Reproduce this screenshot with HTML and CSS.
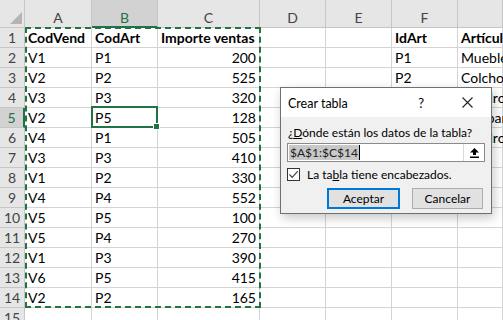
FILE: index.html
```html
<!DOCTYPE html>
<html lang="es">
<head>
<meta charset="utf-8">
<link rel="stylesheet" href="styles.css">
</head>
<body>
<div class="sheet">
  <div class="corner"><span class="tri"></span></div>
  <div class="ch">A</div><div class="ch sel-c">B</div><div class="ch">C</div><div class="ch">D</div><div class="ch">E</div><div class="ch">F</div><div class="ch"></div>

  <div class="rh">1</div><div class="c b">CodVend</div><div class="c b">CodArt</div><div class="c b">Importe ventas</div><div class="c"></div><div class="c"></div><div class="c b">IdArt</div><div class="c b">Artículo</div>
  <div class="rh">2</div><div class="c">V1</div><div class="c">P1</div><div class="c num">200</div><div class="c"></div><div class="c"></div><div class="c">P1</div><div class="c">Mueble</div>
  <div class="rh">3</div><div class="c">V2</div><div class="c">P2</div><div class="c num">525</div><div class="c"></div><div class="c"></div><div class="c">P2</div><div class="c">Colcho</div>
  <div class="rh">4</div><div class="c">V3</div><div class="c">P3</div><div class="c num">320</div><div class="c"></div><div class="c"></div><div class="c">P3</div><div class="c">Cuadro</div>
  <div class="rh sel-r">5</div><div class="c">V2</div><div class="c active">P5</div><div class="c num">128</div><div class="c"></div><div class="c"></div><div class="c">P4</div><div class="c">Lámpar</div>
  <div class="rh">6</div><div class="c">V4</div><div class="c">P1</div><div class="c num">505</div><div class="c"></div><div class="c"></div><div class="c">P5</div><div class="c">Cuadro</div>
  <div class="rh">7</div><div class="c">V3</div><div class="c">P3</div><div class="c num">410</div><div class="c"></div><div class="c"></div><div class="c"></div><div class="c"></div>
  <div class="rh">8</div><div class="c">V1</div><div class="c">P2</div><div class="c num">330</div><div class="c"></div><div class="c"></div><div class="c"></div><div class="c"></div>
  <div class="rh">9</div><div class="c">V4</div><div class="c">P4</div><div class="c num">552</div><div class="c"></div><div class="c"></div><div class="c"></div><div class="c"></div>
  <div class="rh">10</div><div class="c">V5</div><div class="c">P5</div><div class="c num">100</div><div class="c"></div><div class="c"></div><div class="c"></div><div class="c"></div>
  <div class="rh">11</div><div class="c">V5</div><div class="c">P4</div><div class="c num">270</div><div class="c"></div><div class="c"></div><div class="c"></div><div class="c"></div>
  <div class="rh">12</div><div class="c">V1</div><div class="c">P3</div><div class="c num">390</div><div class="c"></div><div class="c"></div><div class="c"></div><div class="c"></div>
  <div class="rh">13</div><div class="c">V6</div><div class="c">P5</div><div class="c num">415</div><div class="c"></div><div class="c"></div><div class="c"></div><div class="c"></div>
  <div class="rh">14</div><div class="c">V2</div><div class="c">P2</div><div class="c num">165</div><div class="c"></div><div class="c"></div><div class="c"></div><div class="c"></div>
  <div class="rh">15</div><div class="c"></div><div class="c"></div><div class="c"></div><div class="c"></div><div class="c"></div><div class="c"></div><div class="c"></div>
</div>
<div class="ants"></div>

<div class="dialog">
  <div class="titlebar">
    <span class="title">Crear tabla</span>
    <span class="help">?</span>
    <svg class="close" width="11" height="11" viewBox="0 0 11 11"><path d="M0.5 0.5 L10.5 10.5 M10.5 0.5 L0.5 10.5" stroke="#222" stroke-width="1.1" fill="none"/></svg>
  </div>
  <div class="dbody">
    <div class="label">¿<u>D</u>ónde están los datos de la tabla?</div>
    <div class="input">
      <span class="field"><span class="selected">$A$1:$C$14</span><span class="caret"></span></span>
      <span class="pick"><svg width="9" height="10" viewBox="0 0 9 10"><path d="M4.5 0 L9 4.5 L6 4.5 L6 7 L3 7 L3 4.5 L0 4.5 Z" fill="#000"/><rect x="0" y="8.5" width="9" height="1.5" fill="#000"/></svg></span>
    </div>
    <div class="check">
      <span class="box"><svg width="11" height="11" viewBox="0 0 11 11"><path d="M1.5 5.5 L4.2 8.3 L9.8 2.2" stroke="#444" stroke-width="1.2" fill="none"/></svg></span>
      <span>La ta<u>b</u>la tiene encabezados.</span>
    </div>
    <div class="buttons">
      <span class="btn primary">Aceptar</span>
      <span class="btn">Cancelar</span>
    </div>
  </div>
</div>
</body>
</html>
```
FILE: styles.css
```css
html, body {
  margin: 0;
  padding: 0;
  width: 503px;
  height: 320px;
  overflow: hidden;
  background: #fff;
}
body {
  position: relative;
  font-family: Lato, "Liberation Sans", sans-serif;
  color: #000;
}
.sheet {
  display: grid;
  grid-template-columns: 25px 67px 66px 102px 66px 66px 66px 45px;
  grid-template-rows: 28px repeat(15, 20px);
  font-size: 14px;
}
.sheet > div {
  box-sizing: border-box;
  white-space: nowrap;
}
.corner {
  background: #e6e6e6;
  border-right: 1px solid #c6c6c6;
  border-bottom: 1px solid #c6c6c6;
  position: relative;
}
.tri {
  position: absolute;
  left: 10px;
  top: 12px;
  width: 0;
  height: 0;
  border-left: 12px solid transparent;
  border-bottom: 12px solid #b4b4b4;
}
.ch {
  background: #e6e6e6;
  color: #444;
  text-align: center;
  border-right: 1px solid #c6c6c6;
  border-bottom: 1px solid #c6c6c6;
  padding-top: 8px;
  line-height: 19px;
  font-size: 14px;
}
.ch.sel-c {
  background: #d2d2d2;
  color: #217346;
  border-bottom: 2px solid #217346;
}
.rh {
  background: #e6e6e6;
  color: #444;
  text-align: center;
  border-right: 1px solid #c6c6c6;
  border-bottom: 1px solid #c6c6c6;
  line-height: 20px;
  font-size: 14px;
}
.rh.sel-r {
  background: #d2d2d2;
  color: #217346;
  border-right: 2px solid #217346;
}
.c {
  border-right: 1px solid #d4d4d4;
  border-bottom: 1px solid #d4d4d4;
  padding: 0 3px;
  line-height: 20px;
}
.num { text-align: right; }
.b { font-weight: bold; }
.active {
  position: relative;
}
.active::after {
  content: "";
  position: absolute;
  left: -1px;
  top: -2px;
  right: -1px;
  bottom: -1px;
  border: 2px solid #217346;
}
.active::before {
  content: "";
  position: absolute;
  right: -3px;
  bottom: -3px;
  width: 5px;
  height: 5px;
  background: #217346;
  border: 1px solid #fff;
  z-index: 1;
}
.ants {
  position: absolute;
  left: 25px;
  top: 27px;
  width: 236px;
  height: 281px;
  box-sizing: border-box;
  border: 2px dashed #217346;
}
.dialog {
  position: absolute;
  left: 280px;
  top: 87px;
  width: 212px;
  height: 127px;
  box-sizing: border-box;
  border: 1px solid #707070;
  background: #f0f0f0;
  box-shadow: 2px 4px 10px rgba(0, 0, 0, 0.22);
  display: flex;
  flex-direction: column;
  font-size: 12px;
}
.titlebar {
  background: #fff;
  height: 29px;
  display: flex;
  align-items: center;
  padding-left: 7px;
}
.title {
  flex: 1;
  font-size: 12.5px;
  padding-top: 1px;
}
.help {
  font-size: 13px;
  margin-right: 38px;
}
.close {
  margin-right: 18px;
}
.dbody {
  display: flex;
  flex-direction: column;
  padding: 8px 8px 0 6px;
}
.label {
  padding-left: 1px;
  line-height: 15px;
}
.label u, .check u {
  text-underline-offset: 1px;
}
.input {
  margin-top: 3px;
  height: 19px;
  width: 198px;
  box-sizing: border-box;
  border: 1px solid #8a8a8a;
  background: #fff;
  display: flex;
}
.field {
  flex: 1;
  display: flex;
  align-items: center;
  padding-left: 1px;
}
.selected {
  background: #c8c8c8;
  color: #222;
  line-height: 15px;
  padding: 0 1px;
}
.caret {
  width: 1px;
  height: 15px;
  background: #000;
}
.pick {
  width: 20px;
  border-left: 1px solid #d8d8d8;
  display: flex;
  align-items: center;
  justify-content: center;
}
.check {
  margin-top: 5px;
  display: flex;
  align-items: center;
  gap: 7px;
  line-height: 15px;
}
.box {
  width: 13px;
  height: 13px;
  box-sizing: border-box;
  border: 1px solid #333;
  background: #fff;
  display: flex;
  align-items: center;
  justify-content: center;
}
.buttons {
  margin-top: 6px;
  display: flex;
  justify-content: flex-end;
  gap: 12px;
}
.btn {
  width: 71px;
  height: 21px;
  box-sizing: border-box;
  border: 1px solid #adadad;
  background: #e1e1e1;
  display: flex;
  align-items: center;
  justify-content: center;
}
.btn.primary {
  width: 73px;
  border: 2px solid #0078d7;
}
```
